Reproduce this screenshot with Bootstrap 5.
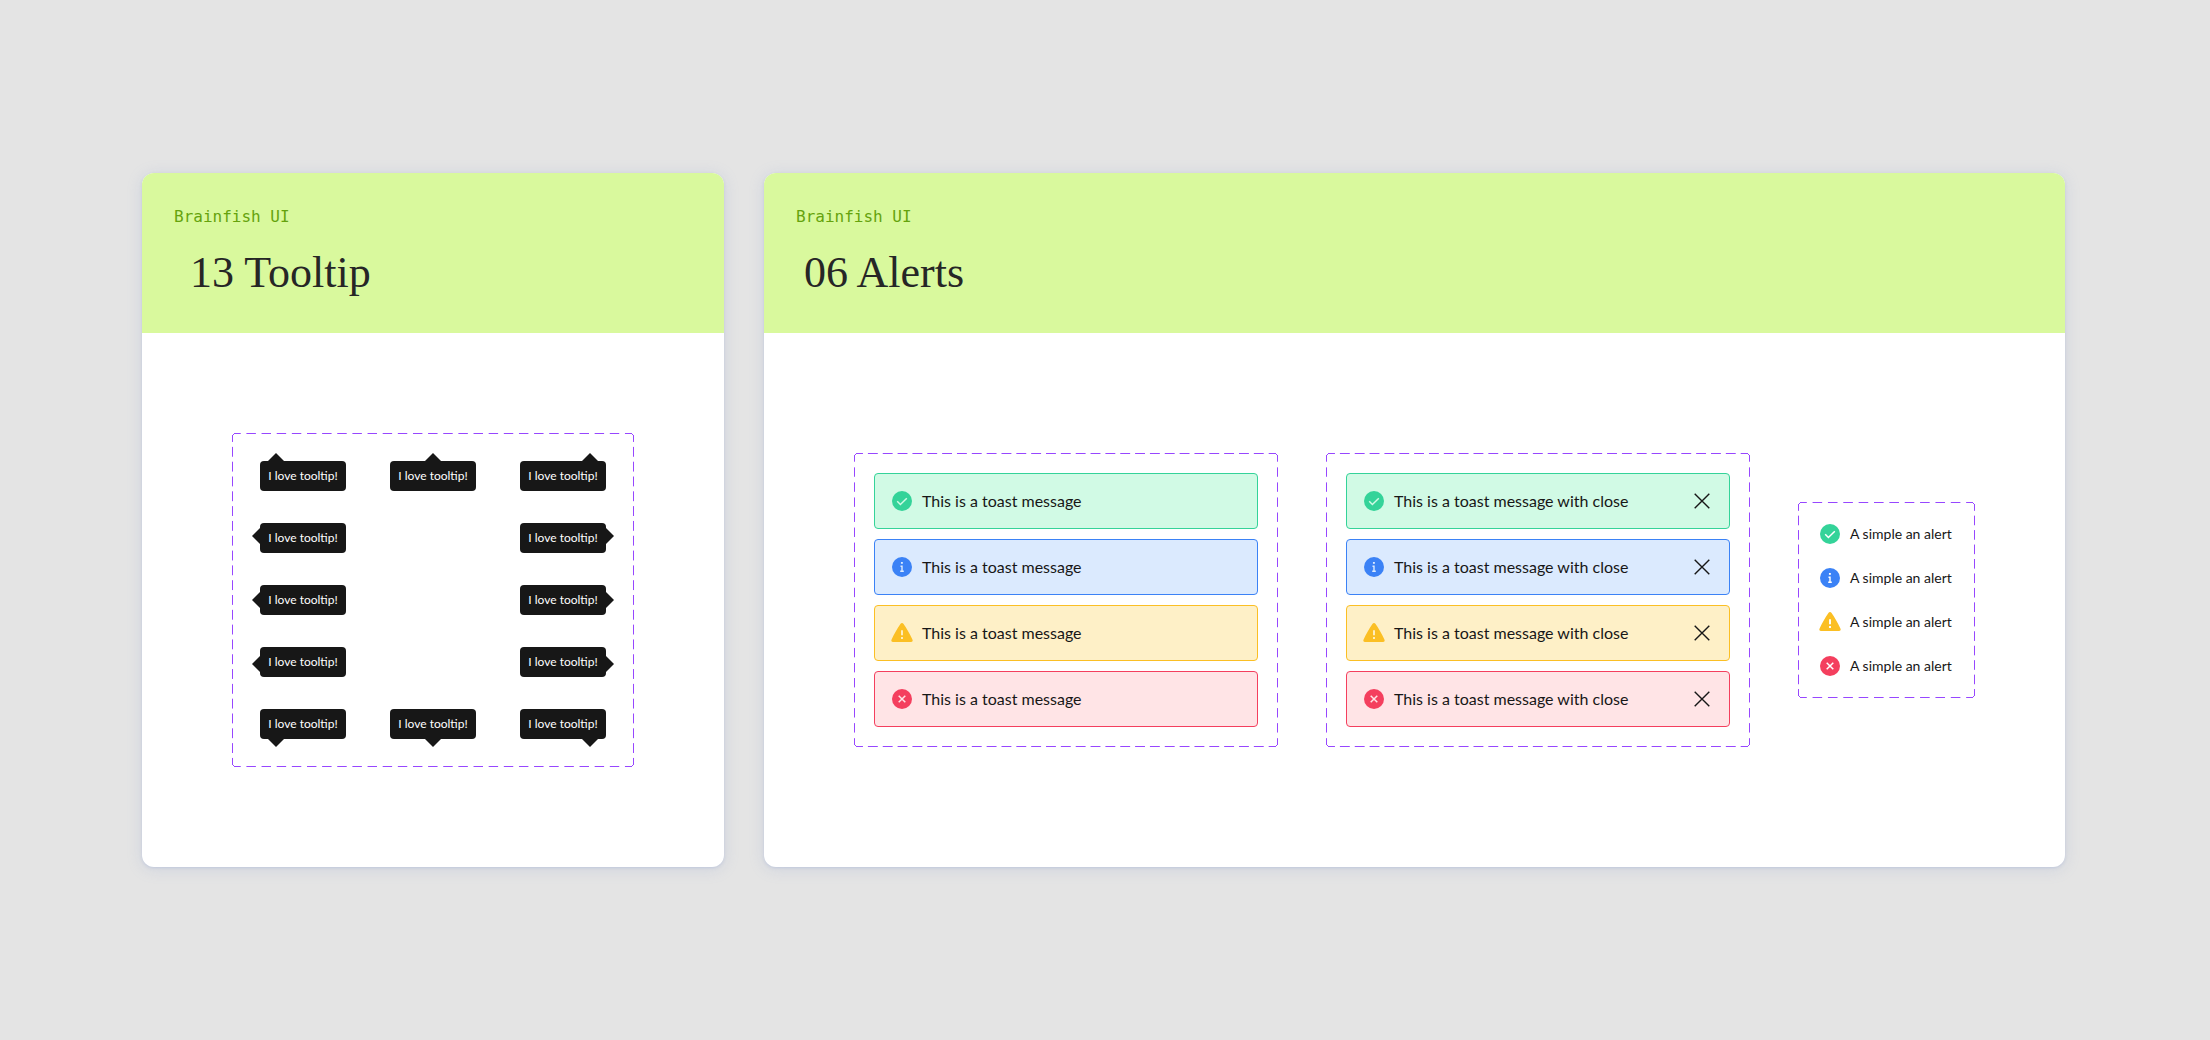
<!DOCTYPE html>
<html lang="en">
<head>
<meta charset="utf-8">
<meta name="viewport" content="width=device-width, initial-scale=1">
<title>Brainfish UI – Tooltip and Alerts</title>
<link href="https://cdn.jsdelivr.net/npm/bootstrap@5.3.0/dist/css/bootstrap.min.css" rel="stylesheet">
<style>
  :root { --frame: #9747ff; --ink: #171717; }
  body { background: #e4e4e4; color: var(--ink); font-family: Lato, "Open Sans", sans-serif; }
  .board { gap: 40px; padding: 32px 145px 32px 142px; }
  .panel { border-radius: 12px; background: #fff; overflow: hidden; box-shadow: 0 1px 3px rgba(120, 145, 205, .24), 0 2px 16px rgba(120, 145, 205, .2); }
  .panel-narrow { flex: 582 1 0; }
  .panel-wide { flex: 1301 1 0; }
  .panel-head { background: #d9f99d; padding: 32px; }
  .panel-brand { font: 16px/24px "DejaVu Sans Mono", monospace; color: #65a30d; }
  .panel-title { font: 44px/56px "Liberation Serif", serif; color: #262626; margin: 16px 0 0; padding-left: 8px; }
  .panel-narrow .panel-title { padding-left: 16px; }
  .panel-main { padding: 100px 60px; min-height: 534px; }
  .frames { gap: 48px; }

  /* Dashed outline: four edges that repeat a whole number of dashes, and four rounded corners */
  .dash-frame { position: relative; padding: 20px; }
  .dash-frame::before, .dash-frame::after { content: ""; position: absolute; pointer-events: none; }
  .dash-frame::before {
    inset: 0 4px;
    background:
      linear-gradient(90deg, var(--frame) 33%, transparent 33% 67%, var(--frame) 67%) 0 0 / 15px 1px,
      linear-gradient(90deg, var(--frame) 33%, transparent 33% 67%, var(--frame) 67%) 0 100% / 15px 1px;
    background-repeat: round no-repeat;
  }
  .dash-frame::after {
    inset: 4px 0;
    background:
      linear-gradient(var(--frame) 33%, transparent 33% 67%, var(--frame) 67%) 0 0 / 1px 15px,
      linear-gradient(var(--frame) 33%, transparent 33% 67%, var(--frame) 67%) 100% 0 / 1px 15px;
    background-repeat: no-repeat round;
  }
  .dash-frame {
    background:
      radial-gradient(circle at 100% 100%, transparent 3px, var(--frame) 3px 4px, transparent 4px) 0 0 / 4px 4px,
      radial-gradient(circle at 0 100%, transparent 3px, var(--frame) 3px 4px, transparent 4px) 100% 0 / 4px 4px,
      radial-gradient(circle at 100% 0, transparent 3px, var(--frame) 3px 4px, transparent 4px) 0 100% / 4px 4px,
      radial-gradient(circle at 0 0, transparent 3px, var(--frame) 3px 4px, transparent 4px) 100% 100% / 4px 4px;
    background-repeat: no-repeat;
  }

  .tip-grid { grid-template-columns: repeat(3, auto); gap: 32px 44px; padding: 28px; }
  .tip { position: relative; min-width: 86px; padding: 6px 8px; border-radius: 4px; background: var(--ink); color: #fff; font-size: 12px; line-height: 18px; text-align: center; white-space: nowrap; }
  .tip-last { grid-column: 3; }
  .tip::after { content: ""; position: absolute; background: var(--ink); }
  .tip-up::after { width: 16px; height: 8px; bottom: 100%; clip-path: polygon(0 100%, 50% 0, 100% 100%); }
  .tip-down::after { width: 16px; height: 8px; top: 100%; clip-path: polygon(0 0, 50% 100%, 100% 0); }
  .tip-left::after { width: 8px; height: 16px; right: 100%; clip-path: polygon(100% 0, 0 50%, 100% 100%); }
  .tip-right::after { width: 8px; height: 16px; left: 100%; clip-path: polygon(0 0, 100% 50%, 0 100%); }
  .at-start::after { left: 8px; }
  .at-center::after { left: calc(50% - 8px); }
  .at-end::after { right: 8px; }
  .at-top::after { top: 5px; }
  .at-middle::after { top: calc(50% - 8px); }
  .at-bottom::after { bottom: 5px; }

  .toast-stack { gap: 10px; width: 424px; }
  .note { --cut: #fff; gap: 8px; font-size: 14px; line-height: 24px; white-space: nowrap; }
  .note.alert { padding: 15px; border: 1px solid var(--tone); border-radius: 4px; background: var(--cut); color: var(--ink); font-size: 16px; }
  .note > svg { width: 24px; height: 24px; flex: none; fill: var(--tone); stroke: var(--cut); }
  .tone-success { --tone: #34d399; }
  .tone-info { --tone: #3b82f6; }
  .tone-warning { --tone: #fbbf24; }
  .tone-danger { --tone: #f43f5e; }
  .alert.tone-success { --cut: #d1fae5; }
  .alert.tone-info { --cut: #dbeafe; }
  .alert.tone-warning { --cut: #fef0c7; }
  .alert.tone-danger { --cut: #ffe4e6; }
  .close-x { width: 24px; height: 24px; color: var(--ink); }
  .note-list { gap: 20px; min-width: 177px; }
</style>
<script src="https://cdn.jsdelivr.net/npm/bootstrap@5.3.0/dist/js/bootstrap.bundle.min.js"></script>
</head>
<body>
<svg class="d-none" aria-hidden="true">
  <symbol id="i-check" viewBox="0 0 24 24"><circle cx="12" cy="12" r="10" stroke="none"/><path d="M7.2 12.3l3.2 3.2 6.4-6.2" fill="none" stroke-width="1.5"/></symbol>
  <symbol id="i-info" viewBox="0 0 24 24"><circle cx="12" cy="12" r="10" stroke="none"/><path d="M10.5 11.2H12v5M10.2 16.3h3.6" fill="none" stroke-width="1.4"/><path d="M11.9 7v1.8" fill="none" stroke-width="1.9"/></symbol>
  <symbol id="i-warn" viewBox="0 0 24 24"><path stroke="none" d="M10.600 2.800a1.700 1.700 0 0 1 2.800 0c3.200 4.500 6.400 10 9 15.800.700 1.500.100 2.400-1.400 2.400H3c-1.500 0-2.100-.900-1.400-2.400 2.600-5.800 5.800-11.300 9-15.800z"/><path d="M12 9.200v5M12 16v2" fill="none" stroke-width="1.900"/></symbol>
  <symbol id="i-error" viewBox="0 0 24 24"><circle cx="12" cy="12" r="10" stroke="none"/><path d="M8.700 8.700l6.600 6.600M15.300 8.700l-6.600 6.600" fill="none" stroke-width="1.500"/></symbol>
  <symbol id="i-close" viewBox="0 0 24 24"><path d="M4.700 4.700l14.600 14.600M19.300 4.700L4.700 19.300" fill="none" stroke="currentColor" stroke-width="1.400"/></symbol>
</svg>

<main class="board d-flex align-items-center min-vh-100">
  <section class="panel panel-narrow">
    <header class="panel-head">
      <div class="panel-brand">Brainfish UI</div>
      <h1 class="panel-title">13 Tooltip</h1>
    </header>
    <div class="panel-main d-flex align-items-center justify-content-center">
      <div class="dash-frame tip-grid d-grid">
        <div class="tip tip-up at-start" role="tooltip">I love tooltip!</div>
        <div class="tip tip-up at-center" role="tooltip">I love tooltip!</div>
        <div class="tip tip-up at-end" role="tooltip">I love tooltip!</div>
        <div class="tip tip-left at-top" role="tooltip">I love tooltip!</div>
        <div class="tip tip-right tip-last at-top" role="tooltip">I love tooltip!</div>
        <div class="tip tip-left at-middle" role="tooltip">I love tooltip!</div>
        <div class="tip tip-right tip-last at-middle" role="tooltip">I love tooltip!</div>
        <div class="tip tip-left at-bottom" role="tooltip">I love tooltip!</div>
        <div class="tip tip-right tip-last at-bottom" role="tooltip">I love tooltip!</div>
        <div class="tip tip-down at-start" role="tooltip">I love tooltip!</div>
        <div class="tip tip-down at-center" role="tooltip">I love tooltip!</div>
        <div class="tip tip-down at-end" role="tooltip">I love tooltip!</div>
      </div>
    </div>
  </section>

  <section class="panel panel-wide">
    <header class="panel-head">
      <div class="panel-brand">Brainfish UI</div>
      <h1 class="panel-title">06 Alerts</h1>
    </header>
    <div class="panel-main frames d-flex align-items-center justify-content-center">
      <div class="dash-frame toast-stack d-flex flex-column">
        <div class="note alert tone-success d-flex align-items-center mb-0" role="alert"><svg><use href="#i-check"/></svg><span>This is a toast message</span></div>
        <div class="note alert tone-info d-flex align-items-center mb-0" role="alert"><svg><use href="#i-info"/></svg><span>This is a toast message</span></div>
        <div class="note alert tone-warning d-flex align-items-center mb-0" role="alert"><svg><use href="#i-warn"/></svg><span>This is a toast message</span></div>
        <div class="note alert tone-danger d-flex align-items-center mb-0" role="alert"><svg><use href="#i-error"/></svg><span>This is a toast message</span></div>
      </div>
      <div class="dash-frame toast-stack d-flex flex-column">
        <div class="note alert tone-success d-flex align-items-center mb-0" role="alert"><svg><use href="#i-check"/></svg><span>This is a toast message with close</span><button type="button" class="close-x btn border-0 p-0 ms-auto d-flex" data-bs-dismiss="alert" aria-label="Close"><svg width="24" height="24"><use href="#i-close"/></svg></button></div>
        <div class="note alert tone-info d-flex align-items-center mb-0" role="alert"><svg><use href="#i-info"/></svg><span>This is a toast message with close</span><button type="button" class="close-x btn border-0 p-0 ms-auto d-flex" data-bs-dismiss="alert" aria-label="Close"><svg width="24" height="24"><use href="#i-close"/></svg></button></div>
        <div class="note alert tone-warning d-flex align-items-center mb-0" role="alert"><svg><use href="#i-warn"/></svg><span>This is a toast message with close</span><button type="button" class="close-x btn border-0 p-0 ms-auto d-flex" data-bs-dismiss="alert" aria-label="Close"><svg width="24" height="24"><use href="#i-close"/></svg></button></div>
        <div class="note alert tone-danger d-flex align-items-center mb-0" role="alert"><svg><use href="#i-error"/></svg><span>This is a toast message with close</span><button type="button" class="close-x btn border-0 p-0 ms-auto d-flex" data-bs-dismiss="alert" aria-label="Close"><svg width="24" height="24"><use href="#i-close"/></svg></button></div>
      </div>
      <div class="dash-frame note-list d-flex flex-column">
        <div class="note tone-success d-flex align-items-center"><svg><use href="#i-check"/></svg><span>A simple an alert</span></div>
        <div class="note tone-info d-flex align-items-center"><svg><use href="#i-info"/></svg><span>A simple an alert</span></div>
        <div class="note tone-warning d-flex align-items-center"><svg><use href="#i-warn"/></svg><span>A simple an alert</span></div>
        <div class="note tone-danger d-flex align-items-center"><svg><use href="#i-error"/></svg><span>A simple an alert</span></div>
      </div>
    </div>
  </section>
</main>
</body>
</html>
